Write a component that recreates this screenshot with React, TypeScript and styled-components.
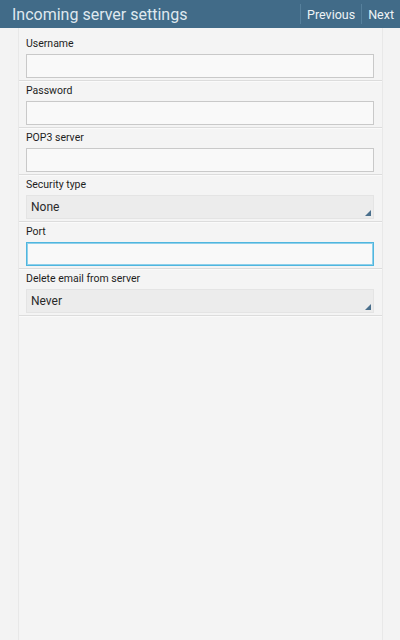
import React from "react";
import { createGlobalStyle, styled } from "styled-components";

const GlobalStyle = createGlobalStyle`
  html, body {
    margin: 0;
    padding: 0;
    background: #f3f3f3;
    font-family: Roboto, "Noto Sans", "Liberation Sans", sans-serif;
  }
`;

const Screen = styled.div`
  width: 400px;
  height: 640px;
  display: flex;
  flex-direction: column;
  background: #f3f3f3;
`;

const Header = styled.header`
  height: 28px;
  flex: none;
  display: flex;
  align-items: center;
  background: #416b88;
  color: #e6edf2;
`;

const Title = styled.h1`
  flex: 1;
  margin: 0;
  padding-left: 12px;
  font-size: 16px;
  font-weight: 400;
  color: #dfe8ef;
`;

const HeaderButton = styled.button`
  height: 20px;
  padding: 0 6px;
  border: none;
  border-left: 1px solid #56809c;
  background: transparent;
  color: #eef3f6;
  font-family: inherit;
  font-size: 12.5px;
`;

const Panel = styled.main`
  flex: 1;
  margin: 0 17px 0 18px;
  padding-top: 6px;
  border-left: 1px solid #e8e8e8;
  border-right: 1px solid #e8e8e8;
  background: #f4f4f4;
`;

const Row = styled.div`
  display: flex;
  flex-direction: column;
  gap: 3px;
  padding: 3px 8px 2px 7px;
  border-bottom: 1px solid #dcdcdc;
  box-shadow: 0 1px 0 #fafafa;
`;

const Label = styled.label`
  font-size: 10.5px;
  line-height: 14px;
  color: #1e1e1e;
`;

const Input = styled.input<{ $focused?: boolean }>`
  box-sizing: border-box;
  height: 24px;
  width: 348px;
  margin: 0;
  padding: 0 5px;
  border: 1px solid ${(p) => (p.$focused ? "#4fb6df" : "#c9c9c9")};
  box-shadow: ${(p) => (p.$focused ? "inset 0 0 0 1px #8fd0ea" : "none")};
  background: #f9f9f9;
  outline: none;
  font-family: inherit;
  font-size: 12px;
`;

const Select = styled.div`
  position: relative;
  box-sizing: border-box;
  height: 24px;
  width: 348px;
  display: flex;
  align-items: center;
  padding-left: 4px;
  border: 1px solid #e4e4e4;
  background: #ececec;
  font-size: 12px;
  color: #2a2a2a;
`;

const Corner = styled.svg`
  position: absolute;
  right: 2px;
  bottom: 2px;
  width: 6px;
  height: 6px;
`;

function Dropdown({ value }: { value: string }) {
  return (
    <Select>
      {value}
      <Corner viewBox="0 0 6 6">
        <polygon points="6,0 6,6 0,6" fill="#4a6f8c" />
      </Corner>
    </Select>
  );
}

export default function App() {
  return (
    <>
      <GlobalStyle />
      <Screen>
        <Header>
          <Title>Incoming server settings</Title>
          <HeaderButton>Previous</HeaderButton>
          <HeaderButton>Next</HeaderButton>
        </Header>
        <Panel>
          <Row>
            <Label>Username</Label>
            <Input />
          </Row>
          <Row>
            <Label>Password</Label>
            <Input type="password" />
          </Row>
          <Row>
            <Label>POP3 server</Label>
            <Input />
          </Row>
          <Row>
            <Label>Security type</Label>
            <Dropdown value="None" />
          </Row>
          <Row>
            <Label>Port</Label>
            <Input $focused />
          </Row>
          <Row>
            <Label>Delete email from server</Label>
            <Dropdown value="Never" />
          </Row>
        </Panel>
      </Screen>
    </>
  );
}
